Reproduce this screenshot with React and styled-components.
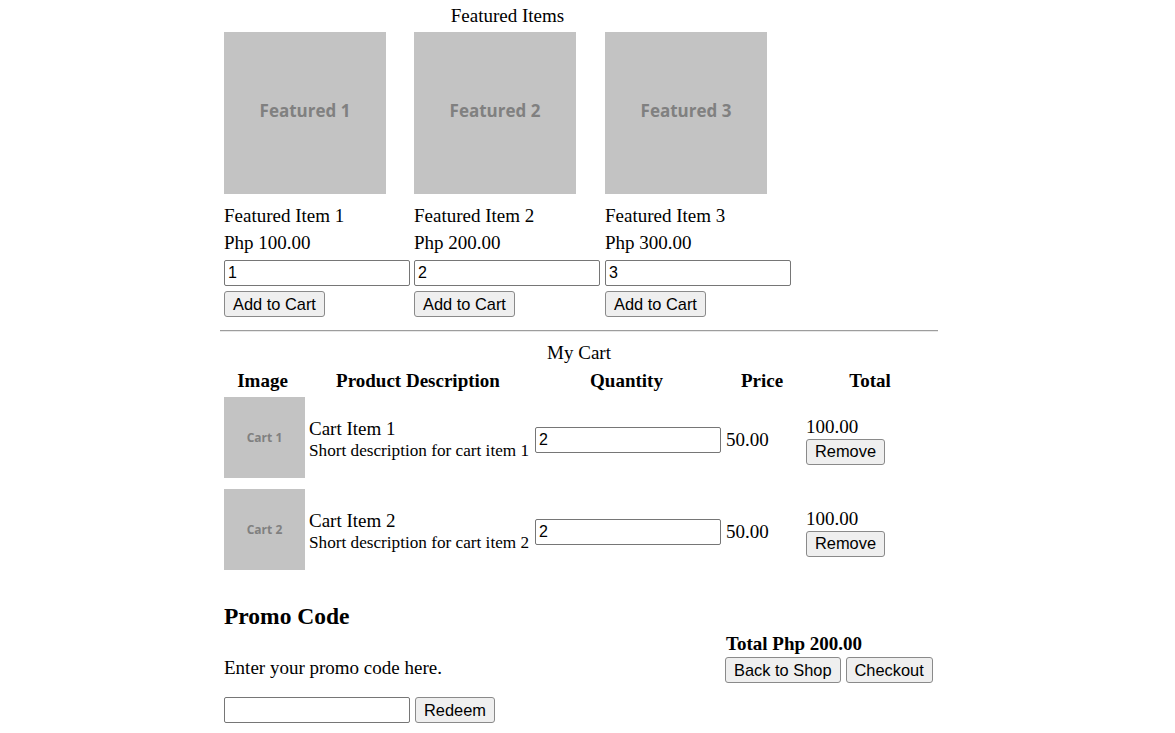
import React from "react";
import styled, { createGlobalStyle } from "styled-components";

const GlobalStyle = createGlobalStyle`
  body {
    margin: 0;
    background: #fff;
    color: #000;
    font-family: "Liberation Serif", "Times New Roman", serif;
    font-size: 19px;
  }
`;

const featured = [
  { id: 1, name: "Featured Item 1", price: "Php 100.00", qty: "1" },
  { id: 2, name: "Featured Item 2", price: "Php 200.00", qty: "2" },
  { id: 3, name: "Featured Item 3", price: "Php 300.00", qty: "3" },
];

const cart = [
  { id: 1, name: "Cart Item 1", desc: "Short description for cart item 1", qty: "2", price: "50.00", total: "100.00" },
  { id: 2, name: "Cart Item 2", desc: "Short description for cart item 2", qty: "2", price: "50.00", total: "100.00" },
];

const App = () => {
  return (
    <React.Fragment>
      <GlobalStyle />
      <Container>
        <FeaturedTable>
          <Caption>Featured Items</Caption>
          <FeaturedRow>
            {featured.map((item) => (
              <FeaturedCol key={item.id}>
                <Placeholder size={162} fontSize={17} lift={3}>
                  Featured {item.id}
                </Placeholder>
                <ItemName>{item.name}</ItemName>
                <ItemPrice>{item.price}</ItemPrice>
                <QtyInput defaultValue={item.qty} />
                <ColButton>Add to Cart</ColButton>
              </FeaturedCol>
            ))}
          </FeaturedRow>
        </FeaturedTable>

        <Divider />

        <CartTitle>My Cart</CartTitle>
        <CartGrid>
          <HeadCell>Image</HeadCell>
          <HeadCell>Product Description</HeadCell>
          <HeadCell>Quantity</HeadCell>
          <HeadCell>Price</HeadCell>
          <HeadCell>Total</HeadCell>
        </CartGrid>
        {cart.map((row) => (
          <CartRow key={row.id}>
            <ImageCell>
              <Placeholder size={81} fontSize={12} lift={0}>
                Cart {row.id}
              </Placeholder>
            </ImageCell>
            <Cell>
              <CartName>{row.name}</CartName>
              <CartDesc>{row.desc}</CartDesc>
            </Cell>
            <Cell>
              <QtyInput defaultValue={row.qty} />
            </Cell>
            <Cell>
              <Amount>{row.price}</Amount>
            </Cell>
            <Cell>
              <Amount>{row.total}</Amount>
              <ColButton gap={1}>Remove</ColButton>
            </Cell>
          </CartRow>
        ))}

        <Bottom>
          <Promo>
            <PromoTitle>Promo Code</PromoTitle>
            <PromoText>Enter your promo code here.</PromoText>
            <PromoForm>
              <QtyInput />
              <Button>Redeem</Button>
            </PromoForm>
          </Promo>
          <Summary>
            <TotalText>Total Php 200.00</TotalText>
            <Actions>
              <Button>Back to Shop</Button>
              <Button>Checkout</Button>
            </Actions>
          </Summary>
        </Bottom>
      </Container>
    </React.Fragment>
  );
};

export default App;

const Container = styled.div`
  width: 718px;
  margin-left: 220px;
  padding-top: 4px;
`;

const FeaturedTable = styled.div`
  width: fit-content;
  padding: 0 4px;
`;

const Caption = styled.div`
  text-align: center;
  line-height: 22px;
  padding-top: 1px;
`;

const FeaturedRow = styled.div`
  display: grid;
  grid-template-columns: 190px 191px 186px;
  margin-top: 5px;
`;

const FeaturedCol = styled.div`
  display: flex;
  flex-direction: column;
  align-items: flex-start;
`;

const Placeholder = styled.div`
  width: ${(props) => props.size}px;
  height: ${(props) => props.size}px;
  box-sizing: border-box;
  padding-bottom: ${(props) => props.lift * 2}px;
  background: #c3c3c3;
  color: #808080;
  display: flex;
  align-items: center;
  justify-content: center;
  font-family: "Open Sans", "Liberation Sans", sans-serif;
  font-weight: bold;
  font-size: ${(props) => props.fontSize}px;
`;

const ItemName = styled.div`
  margin-top: 11px;
  line-height: 22px;
`;

const ItemPrice = styled.div`
  margin-top: 5px;
  line-height: 22px;
`;

const QtyInput = styled.input`
  box-sizing: border-box;
  width: 186px;
  height: 26px;
  margin: 0;
  padding: 1px 3px;
  border: 1px solid #767676;
  border-radius: 2px;
  font-family: "Liberation Sans", Arial, sans-serif;
  font-size: 16px;
  color: #000;
  background: #fff;
  outline: none;
  ${FeaturedCol} & {
    margin-top: 6px;
  }
`;

const Button = styled.button`
  box-sizing: border-box;
  height: 26px;
  margin: 0;
  padding: 0 8px;
  border: 1px solid #8a8a8a;
  border-radius: 3px;
  background: #efefef;
  color: #000;
  font-family: "Liberation Sans", Arial, sans-serif;
  font-size: 16.4px;
  cursor: pointer;
`;

const ColButton = styled(Button)`
  margin-top: ${(props) => (props.gap !== undefined ? props.gap : 5)}px;
`;

const Divider = styled.div`
  margin-top: 13px;
  border-top: 1px solid #9d9d9d;
  border-bottom: 1px solid #e8e8e8;
`;

const CartTitle = styled.div`
  margin-top: 10px;
  text-align: center;
  line-height: 22px;
`;

const CartGrid = styled.div`
  display: grid;
  grid-template-columns: 85px 226px 191px 80px 1fr;
  margin-top: 6px;
`;

const HeadCell = styled.div`
  text-align: center;
  font-weight: bold;
  line-height: 22px;
`;

const CartRow = styled(CartGrid)`
  align-items: center;
  margin-top: 5px;
  & + & {
    margin-top: 11px;
  }
`;

const ImageCell = styled.div`
  padding-left: 4px;
  align-self: stretch;
`;

const Cell = styled.div`
  padding: 5px 0 0 4px;
  display: flex;
  flex-direction: column;
  align-items: flex-start;
`;

const CartName = styled.div`
  line-height: 22px;
`;

const CartDesc = styled.div`
  font-size: 17.2px;
  line-height: 22px;
  white-space: nowrap;
`;

const Amount = styled.div`
  line-height: 22px;
`;

const Bottom = styled.div`
  display: grid;
  grid-template-columns: 502px 1fr;
  margin-top: 33px;
`;

const Promo = styled.div`
  padding-left: 4px;
`;

const PromoTitle = styled.h3`
  margin: 0;
  font-size: 23.5px;
  line-height: 26px;
`;

const PromoText = styled.p`
  margin: 28px 0 0;
  line-height: 22px;
`;

const PromoForm = styled.div`
  display: flex;
  gap: 5px;
  margin-top: 18px;
`;

const Summary = styled.div`
  padding: 30px 0 0 3px;
`;

const TotalText = styled.div`
  padding-left: 1px;
  font-weight: bold;
  line-height: 22px;
`;

const Actions = styled.div`
  display: flex;
  gap: 5px;
  margin-top: 2px;
`;
